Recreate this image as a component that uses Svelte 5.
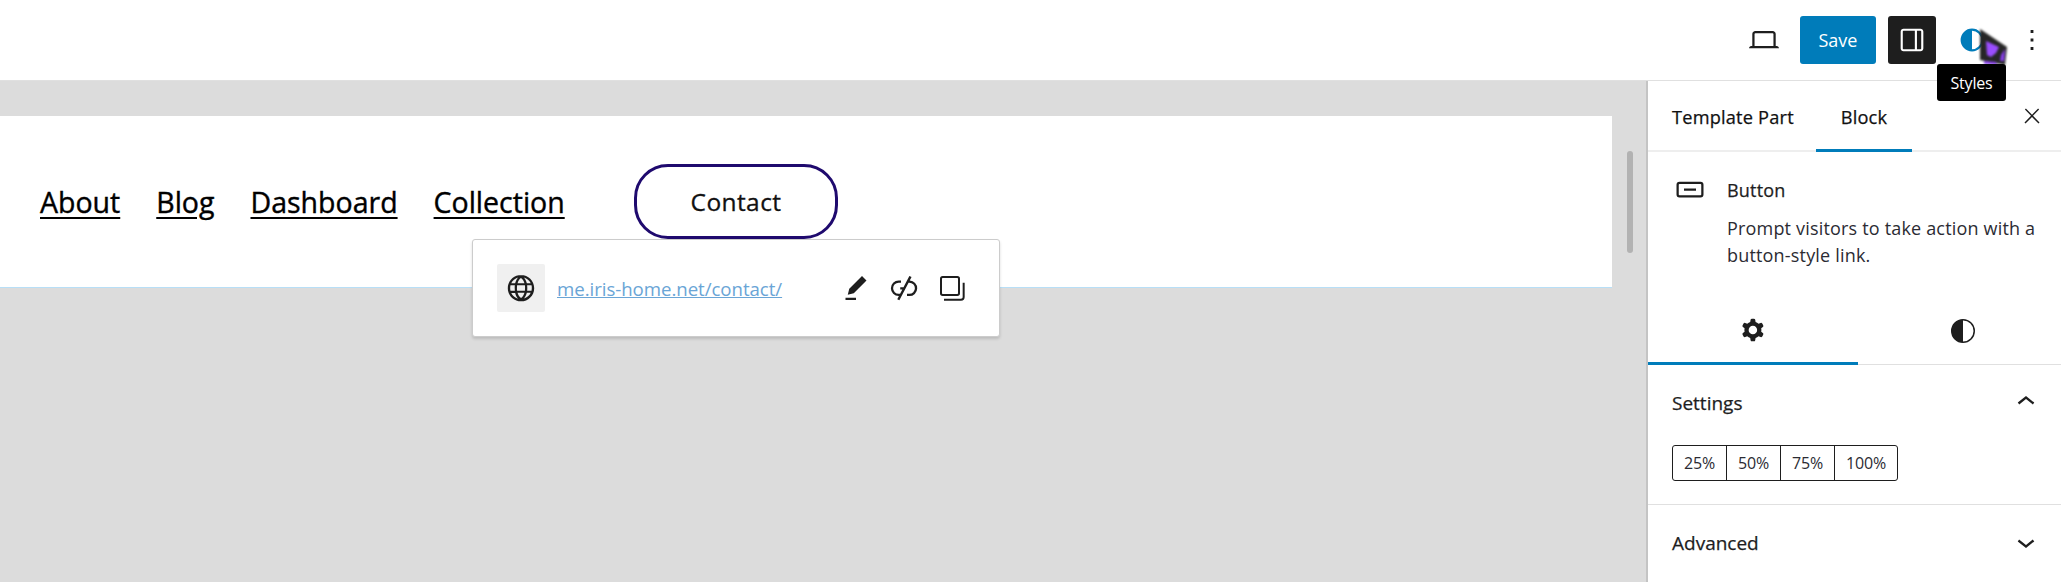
<script lang="ts">
	const navLinks = ['About', 'Blog', 'Dashboard', 'Collection'];
	const widths = ['25%', '50%', '75%', '100%'];
</script>

<div class="editor">
	<header class="topbar">
		<button class="icon-btn laptop" aria-label="View">
			<svg viewBox="0 0 24 24" width="36" height="36"><path d="M20.500 16h-.7V8c0-1.100-.9-2-2-2H6.200c-1.100 0-2 .9-2 2v8h-.7c-.8 0-1.500.7-1.500 1.500h20c0-.8-.7-1.500-1.500-1.500zM5.700 8c0-.3.2-.5.5-.5h11.600c.3 0 .5.2.5.5v8H5.700V8z" /></svg>
		</button>
		<button class="save">Save</button>
		<button class="panel-toggle" aria-label="Settings">
			<svg viewBox="0 0 24 24" width="34" height="34"><path fill="#fff" d="M18 4H6c-1.100 0-2 .9-2 2v12c0 1.100.9 2 2 2h12c1.100 0 2-.9 2-2V6c0-1.100-.9-2-2-2zM5.500 6c0-.3.2-.5.5-.5h8v13H6c-.3 0-.5-.2-.5-.5V6zm13 12c0 .3-.2.5-.5.500h-2.500v-13H18c.3 0 .5.2.5.5v12z" /></svg>
		</button>
		<button class="icon-btn styles" aria-label="Styles">
			<svg viewBox="0 0 24 24" width="34" height="34"><circle cx="12" cy="12" r="7.300" fill="none" stroke="#007cba" stroke-width="1.500" /><path fill="#007cba" d="M12 4.700a7.300 7.300 0 0 0 0 14.600z" /></svg>
		</button>
		<button class="icon-btn more" aria-label="Options">
			<svg viewBox="0 0 24 24" width="34" height="34"><path d="M13 19h-2v-2h2v2zm0-6h-2v-2h2v2zm0-6h-2V5h2v2z" /></svg>
		</button>
		<svg class="cursor" viewBox="0 0 30 38" width="30" height="38">
			<path fill="#262626" d="M1 1 L28 19 L26 37 L1 32 Z" />
			<path fill="#9a4dff" d="M7 13 L20 19 L17 25 L12 29 L8 27 Z" />
			<path fill="#8a3ff0" d="M22 27 L26 21 L25 33 L21 33 Z" />
			<path fill="#8a3ff0" d="M5 33 L17 34 L18 37 L5 36 Z" />
		</svg>
		<div class="tooltip">Styles</div>
	</header>

	<div class="workspace">
		<main class="canvas">
			<section class="block">
				<nav class="nav">
					{#each navLinks as link}
						<a href="#top">{link}</a>
					{/each}
				</nav>
				<div class="contact">Contact</div>
			</section>
			<div class="scrollbar"></div>

			<div class="link-popover">
				<div class="globe">
					<svg viewBox="0 0 24 24" width="36" height="36"><path d="M12 3.300c-4.800 0-8.800 3.900-8.800 8.800 0 4.800 3.900 8.800 8.800 8.800 4.800 0 8.800-3.900 8.800-8.800s-4-8.800-8.800-8.800zm6.500 5.500h-2.600C15.400 7.300 14.800 6 14 5c2 .6 3.600 2 4.500 3.800zm.7 3.200c0 .6-.1 1.200-.2 1.800h-2.900c.1-.6.1-1.200.1-1.800s-.1-1.200-.1-1.800H19c.2.6.2 1.200.2 1.800zM12 18.700c-1-.7-1.800-1.900-2.300-3.500h4.600c-.5 1.600-1.300 2.900-2.300 3.500zm-2.600-4.900c-.1-.6-.1-1.100-.1-1.800 0-.6.1-1.200.1-1.800h5.200c.1.6.1 1.100.1 1.800s-.1 1.200-.1 1.800H9.400zM4.800 12c0-.6.1-1.200.2-1.800h2.900c-.1.6-.1 1.200-.1 1.800 0 .6.1 1.200.1 1.800H5c-.2-.6-.2-1.200-.2-1.800zM12 5.300c1 .7 1.800 1.900 2.300 3.500H9.700c.5-1.600 1.300-2.900 2.300-3.500zM10 5c-.8 1-1.400 2.300-1.900 3.800H5.500C6.400 7 8 5.600 10 5zM5.500 15.300h2.600c.4 1.500 1 2.800 1.900 3.800-2-.6-3.600-2-4.500-3.800zm8.500 3.700c.8-1 1.400-2.200 1.900-3.800h2.600c-.9 1.900-2.500 3.200-4.500 3.800z" /></svg>
				</div>
				<a class="url" href="#top">me.iris-home.net/contact/</a>
				<div class="popover-actions">
					<div class="action"><svg viewBox="0 0 24 24" width="36" height="36"><path d="m19 7-3-3-8.500 8.500-1 4 4-1L19 7Zm-7 11.500H5V20h7v-1.500Z" /></svg></div>
					<div class="action"><svg viewBox="0 0 24 24" width="36" height="36"><path d="M17.031 4.703 15.576 4l-1.560 3H14v.03l-2.324 4.470H9.500V13h1.396l-1.502 2.889h-.95a3.694 3.694 0 0 1 0-7.389H10V7H8.444a5.194 5.194 0 1 0 0 10.389h.17L7.500 19.530l1.416.719L15.049 8.500h.507a3.694 3.694 0 0 1 0 7.390H14v1.500h1.556a5.194 5.194 0 0 0 .273-10.383l1.202-2.304Z" /></svg></div>
					<div class="action"><svg viewBox="0 0 24 24" width="32" height="32"><path fill-rule="evenodd" clip-rule="evenodd" d="M5 4.500h11a.5.5 0 0 1 .5.5v11a.5.5 0 0 1-.5.500H5a.5.5 0 0 1-.5-.5V5a.5.5 0 0 1 .5-.5ZM3 5a2 2 0 0 1 2-2h11a2 2 0 0 1 2 2v11a2 2 0 0 1-2 2H5a2 2 0 0 1-2-2V5Zm17 3v10.750c0 .69-.56 1.250-1.250 1.250H6v1.500h12.750a2.750 2.750 0 0 0 2.750-2.750V8H20Z" /></svg></div>
				</div>
			</div>
		</main>

		<aside class="sidebar">
			<div class="tabs">
				<div class="tab first">Template Part</div>
				<div class="tab active">Block</div>
				<button class="close" aria-label="Close">
					<svg viewBox="0 0 24 24" width="24" height="24"><path d="M13 11.800l6.100-6.300-1-1-6.100 6.200-6.100-6.200-1 1 6.100 6.300-6.500 6.700 1 1 6.500-6.600 6.500 6.600 1-1z" /></svg>
				</button>
			</div>

			<div class="block-card">
				<svg viewBox="0 0 24 24" width="36" height="36"><path d="M8 12.500h8V11H8v1.500Z M19 6.500H5a2 2 0 0 0-2 2V15a2 2 0 0 0 2 2h14a2 2 0 0 0 2-2V8.500a2 2 0 0 0-2-2ZM5 8h14a.5.5 0 0 1 .5.5V15a.5.5 0 0 1-.5.500H5a.5.5 0 0 1-.5-.5V8.500A.5.5 0 0 1 5 8Z" /></svg>
				<div class="card-text">
					<h2>Button</h2>
					<p>Prompt visitors to take action with a button-style link.</p>
				</div>
			</div>

			<div class="inspector-tabs">
				<div class="inspector-tab active">
					<svg viewBox="0 0 24 24" width="34" height="34"><path fill-rule="evenodd" clip-rule="evenodd" d="M10.289 4.836A1 1 0 0 1 11.275 4h1.306a1 1 0 0 1 .987.836l.244 1.466c.787.26 1.503.679 2.108 1.218l1.393-.522a1 1 0 0 1 1.216.437l.653 1.130a1 1 0 0 1-.23 1.273l-1.148.944a6.025 6.025 0 0 1 0 2.435l1.149.946a1 1 0 0 1 .23 1.272l-.653 1.130a1 1 0 0 1-1.216.437l-1.394-.522c-.605.54-1.320.958-2.108 1.218l-.244 1.466a1 1 0 0 1-.987.836h-1.306a1 1 0 0 1-.986-.836l-.244-1.466a5.995 5.995 0 0 1-2.108-1.218l-1.394.522a1 1 0 0 1-1.217-.436l-.653-1.131a1 1 0 0 1 .23-1.272l1.149-.946a6.026 6.026 0 0 1 0-2.435l-1.148-.944a1 1 0 0 1-.23-1.272l.653-1.131a1 1 0 0 1 1.217-.437l1.393.522a5.994 5.994 0 0 1 2.108-1.218l.244-1.466ZM14.929 12a3 3 0 1 1-6 0 3 3 0 0 1 6 0Z" /></svg>
				</div>
				<div class="inspector-tab">
					<svg viewBox="0 0 24 24" width="36" height="36"><circle cx="12" cy="12" r="7.500" fill="none" stroke="#1e1e1e" stroke-width="1" /><path d="M12 4.500a7.500 7.500 0 0 0 0 15z" /></svg>
				</div>
			</div>

			<section class="panel settings">
				<div class="panel-head">
					<span>Settings</span>
					<svg viewBox="0 0 24 24" width="36" height="36"><path d="M6.500 12.400L12 8l5.500 4.400-.9 1.200L12 10l-4.500 3.600-1-1.200z" /></svg>
				</div>
				<div class="width-group">
					{#each widths as w}
						<div class="width-option">{w}</div>
					{/each}
				</div>
			</section>

			<section class="panel last">
				<div class="panel-head">
					<span>Advanced</span>
					<svg viewBox="0 0 24 24" width="36" height="36"><path d="M17.500 11.600L12 16l-5.500-4.400.9-1.200L12 14l4.500-3.600 1 1.200z" /></svg>
				</div>
			</section>
		</aside>
	</div>
</div>

<style>
	:global(body) {
		margin: 0;
		background: #fff;
	}

	.editor {
		width: 2061px;
		height: 582px;
		overflow: hidden;
		display: flex;
		flex-direction: column;
		font-family: 'Open Sans', 'Noto Sans', sans-serif;
		color: #1e1e1e;
	}

	button {
		border: 0;
		background: none;
		padding: 0;
		font: inherit;
		display: flex;
		align-items: center;
		justify-content: center;
	}

	svg {
		display: block;
		fill: currentColor;
		flex-shrink: 0;
	}

	/* top bar */
	.topbar {
		position: relative;
		height: 80px;
		flex-shrink: 0;
		border-bottom: 1px solid #e0e0e0;
		display: flex;
		align-items: center;
		justify-content: flex-end;
		padding: 1px 5px 0 0;
		margin-top: -1px;
		background: #fff;
	}

	.icon-btn {
		width: 48px;
		height: 48px;
		color: #1e1e1e;
	}

	.laptop {
		margin-right: 12px;
	}

	.save {
		width: 76px;
		height: 48px;
		background: #007cba;
		color: #fff;
		border-radius: 3px;
		font-size: 18px;
		margin-right: 12px;
	}

	.panel-toggle {
		width: 48px;
		height: 48px;
		background: #1e1e1e;
		border-radius: 3px;
		margin-right: 12px;
	}

	.styles {
		margin-right: 12px;
	}

	.cursor {
		position: absolute;
		left: 1979px;
		top: 29px;
		filter: blur(0.8px);
	}

	.tooltip {
		position: absolute;
		left: 1937px;
		top: 65px;
		width: 69px;
		height: 37px;
		background: #000;
		color: #fff;
		border-radius: 3px;
		font-size: 16px;
		letter-spacing: -0.2px;
		display: flex;
		align-items: center;
		justify-content: center;
	}

	/* canvas */
	.workspace {
		flex: 1;
		display: flex;
		min-height: 0;
	}

	.canvas {
		position: relative;
		flex: 1;
		background: #dcdcdc;
		padding-top: 35px;
		border-right: 2px solid #c4c4c4;
	}

	.block {
		width: 1612px;
		height: 172px;
		background: #fff;
		border-bottom: 1px solid #b8dff7;
		display: flex;
		align-items: flex-start;
		padding: 48px 0 0 40px;
		box-sizing: border-box;
	}

	.nav {
		display: flex;
		gap: 36px;
		height: 75px;
		align-items: center;
		width: 594px;
		flex-shrink: 0;
	}

	.nav a {
		color: #000;
		font-size: 28.5px;
		-webkit-text-stroke: 0.4px #000;
		text-underline-offset: 4px;
		text-decoration-thickness: 2px;
	}

	.contact {
		width: 204px;
		height: 75px;
		box-sizing: border-box;
		border: 3px solid #1f0a6e;
		border-radius: 34px;
		display: flex;
		align-items: center;
		justify-content: center;
		font-size: 24.5px;
		-webkit-text-stroke: 0.3px #111;
		letter-spacing: 0.4px;
		color: #111;
	}

	.scrollbar {
		position: absolute;
		left: 1627px;
		top: 70px;
		width: 6px;
		height: 102px;
		background: #b2b2b2;
		border-radius: 3px;
	}

	.link-popover {
		position: absolute;
		left: 472px;
		top: 158px;
		width: 528px;
		height: 98px;
		box-sizing: border-box;
		background: #fff;
		border: 1px solid #ccc;
		border-radius: 3px;
		box-shadow: 0 2px 3px rgba(0, 0, 0, 0.15);
		display: flex;
		align-items: center;
		padding-left: 24px;
	}

	.globe {
		width: 48px;
		height: 48px;
		background: #f0f0f0;
		border-radius: 2px;
		display: flex;
		align-items: center;
		justify-content: center;
		margin-right: 12px;
	}

	.url {
		color: #6aa5d6;
		font-size: 18.67px;
		letter-spacing: -0.05px;
	}

	.popover-actions {
		display: flex;
		align-items: center;
		margin-left: auto;
		margin-right: 23px;
		color: #1e1e1e;
	}

	.action {
		width: 48px;
		display: flex;
		justify-content: center;
	}

	/* sidebar */
	.sidebar {
		width: 413px;
		flex-shrink: 0;
		background: #fff;
		font-size: 17.33px;
		overflow: hidden;
	}

	.tabs {
		position: relative;
		display: flex;
		height: 71px;
		box-sizing: border-box;
		border-bottom: 2px solid #eee;
		padding-left: 24px;
	}

	.tab {
		height: 71px;
		box-sizing: border-box;
		display: flex;
		align-items: center;
		font-size: 18.2px;
		-webkit-text-stroke: 0.25px #111;
		letter-spacing: 0.2px;
		color: #111;
		flex-shrink: 0;
	}

	.tab.first {
		width: 144px;
	}

	.tab.active {
		width: 96px;
		justify-content: center;
		border-bottom: 3px solid #007cba;
		padding-top: 3px;
	}

	.close {
		position: absolute;
		right: 17px;
		top: 23px;
		width: 24px;
		height: 24px;
		color: #1e1e1e;
	}

	.block-card {
		display: flex;
		gap: 19px;
		padding: 20px 0 0 24px;
		height: 146px;
		box-sizing: border-box;
	}

	.card-text {
		width: 318px;
	}

	.card-text h2 {
		margin: 0;
		font-size: 18px;
		font-weight: 400;
		-webkit-text-stroke: 0.25px #1e1e1e;
		letter-spacing: 0.2px;
		line-height: 36px;
	}

	.card-text p {
		margin: 7px 0 0;
		font-size: 18px;
		line-height: 27px;
		letter-spacing: 0.18px;
		color: #2b2b33;
	}

	.inspector-tabs {
		display: flex;
		height: 67px;
		width: 420px;
		box-sizing: border-box;
		border-bottom: 1px solid #e0e0e0;
	}

	.inspector-tab {
		flex: 1;
		display: flex;
		align-items: center;
		justify-content: center;
	}

	.inspector-tab.active {
		height: 67px;
		border-bottom: 3px solid #007cba;
		box-sizing: border-box;
	}

	.panel {
		padding: 0 24px;
		border-bottom: 1px solid #e0e0e0;
	}

	.panel.last {
		border-bottom: 0;
	}

	.settings {
		height: 140px;
		box-sizing: border-box;
	}

	.panel-head {
		height: 76px;
		display: flex;
		align-items: center;
		justify-content: space-between;
		font-size: 19px;
		-webkit-text-stroke: 0.25px #1e1e1e;
	}

	.panel-head svg {
		margin-right: -7px;
		margin-top: -3px;
	}

	.width-group {
		display: inline-flex;
		border: 1px solid #1e1e1e;
		border-radius: 3px;
		margin-top: 4px;
		height: 36px;
		box-sizing: border-box;
	}

	.width-option {
		width: 54px;
		box-sizing: border-box;
		display: flex;
		align-items: center;
		justify-content: center;
		font-size: 16px;
		letter-spacing: -0.2px;
		border-left: 1px solid #1e1e1e;
		color: #2b2b33;
	}

	.width-option:first-child {
		border-left: 0;
		width: 53px;
	}

	.width-option:last-child {
		width: 63px;
	}
</style>
